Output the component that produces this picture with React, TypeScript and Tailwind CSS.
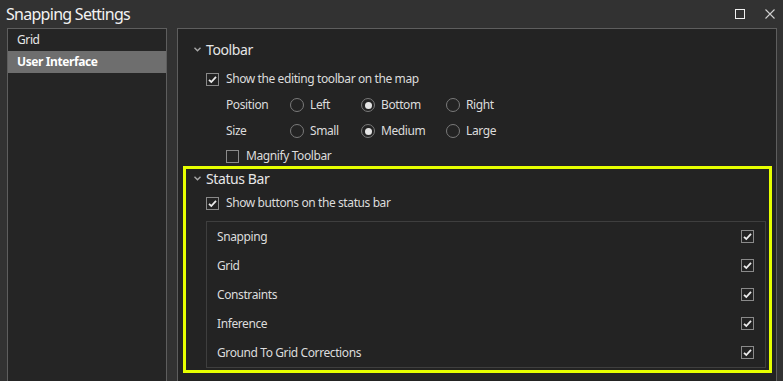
import React from 'react';

const font = { fontFamily: '"Segoe UI", "Noto Sans", "Open Sans", sans-serif' };

const CheckBox: React.FC<{ checked?: boolean }> = ({ checked }) => (
  <span className="flex h-[13px] w-[13px] shrink-0 items-center justify-center border border-[#8a8a8a] bg-[#232323]">
    {checked && (
      <svg width="11" height="11" viewBox="0 0 11 11">
        <path d="M2 5.8 L4.3 8 L9 2.8" fill="none" stroke="#ececec" strokeWidth="1.8" />
      </svg>
    )}
  </span>
);

const Radio: React.FC<{ on?: boolean }> = ({ on }) => (
  <span className="flex h-[14px] w-[14px] shrink-0 items-center justify-center rounded-full border border-[#7a7a7a]">
    {on && <span className="h-[7px] w-[7px] rounded-full bg-[#e4e4e4]" />}
  </span>
);

const Chevron: React.FC = () => (
  <svg width="7" height="5" viewBox="0 0 7 5" className="shrink-0">
    <path d="M0.5 0.8 L3.5 3.8 L6.5 0.8" fill="none" stroke="#a8a8a8" strokeWidth="1.4" />
  </svg>
);

const Header: React.FC<{ label: string }> = ({ label }) => (
  <div className="flex h-[20px] items-center gap-[5px]">
    <Chevron />
    <span className="text-[14px] text-[#e6e6e6]">{label}</span>
  </div>
);

const RadioRow: React.FC<{ label: string; options: string[]; selected: number }> = ({ label, options, selected }) => (
  <div className="flex h-[20px] items-center pl-[32px] text-[12px] text-[#dcdcdc]">
    <span className="w-[64px]">{label}</span>
    {options.map((o, i) => (
      <div key={o} className={`flex items-center gap-[6px] ${i === 0 ? 'w-[71px]' : 'w-[85px]'}`}>
        <Radio on={i === selected} />
        <span>{o}</span>
      </div>
    ))}
  </div>
);

const items = ['Snapping', 'Grid', 'Constraints', 'Inference', 'Ground To Grid Corrections'];

export default function App() {
  return (
    <div className="flex h-[381px] w-[783px] flex-col overflow-hidden bg-[#323232] tracking-[-0.025em]" style={font}>
      {/* title bar */}
      <div className="flex h-[28px] shrink-0 items-center justify-between pl-[6px] pr-[8px]">
        <span className="text-[16px] tracking-[-0.045em] text-[#f2f2f2]">Snapping Settings</span>
        <div className="flex items-center gap-[20px]">
          <span className="h-[10px] w-[10px] border-[1.5px] border-[#f0f0f0]" />
          <svg width="10" height="10" viewBox="0 0 10 10">
            <path d="M0.5 0.5 L9.5 9.5 M9.5 0.5 L0.5 9.5" stroke="#cfcfcf" strokeWidth="1.1" />
          </svg>
        </div>
      </div>

      <div className="flex min-h-0 flex-1 gap-[10px] pl-[7px]">
        {/* nav */}
        <div className="h-[400px] w-[160px] shrink-0 border border-[#5e5e5e] bg-[#252525] text-[12px] text-[#e8e8e8]">
          <div className="flex h-[22px] items-center pl-[9px]">Grid</div>
          <div className="flex h-[22px] items-center bg-[#6e6e6e] pl-[9px] font-bold text-white">User Interface</div>
        </div>

        {/* content */}
        <div className="h-[400px] w-[600px] shrink-0 border border-[#5e5e5e] bg-[#232323] pl-[16px] pt-[10px]">
          <Header label="Toolbar" />
          <div className="mt-[10px] flex h-[20px] items-center gap-[7px] pl-[12px] text-[12px] text-[#dcdcdc]">
            <CheckBox checked />
            <span>Show the editing toolbar on the map</span>
          </div>
          <div className="mt-[6px]">
            <RadioRow label="Position" options={['Left', 'Bottom', 'Right']} selected={1} />
          </div>
          <div className="mt-[6px]">
            <RadioRow label="Size" options={['Small', 'Medium', 'Large']} selected={1} />
          </div>
          <div className="mt-[5px] flex h-[20px] items-center gap-[7px] pl-[32px] text-[12px] text-[#dcdcdc]">
            <CheckBox />
            <span>Magnify Toolbar</span>
          </div>

          {/* status bar section */}
          <div className="relative mt-[2px] w-[572px]">
            <div className="pointer-events-none absolute -bottom-[5px] -left-[11px] -right-[6px] -top-[2px] border-[3px] border-[#e6ff00]" />
            <Header label="Status Bar" />
            <div className="mt-[5px] flex h-[20px] items-center gap-[7px] pl-[12px] text-[12px] text-[#dcdcdc]">
              <CheckBox checked />
              <span>Show buttons on the status bar</span>
            </div>
            <div className="ml-[12px] mt-[8px] border border-[#3e3e3e] text-[12px] text-[#dcdcdc]">
              {items.map((it) => (
                <div key={it} className="flex h-[29px] items-center justify-between pl-[10px] pr-[11px]">
                  <span>{it}</span>
                  <CheckBox checked />
                </div>
              ))}
            </div>
          </div>
        </div>
      </div>
    </div>
  );
}
